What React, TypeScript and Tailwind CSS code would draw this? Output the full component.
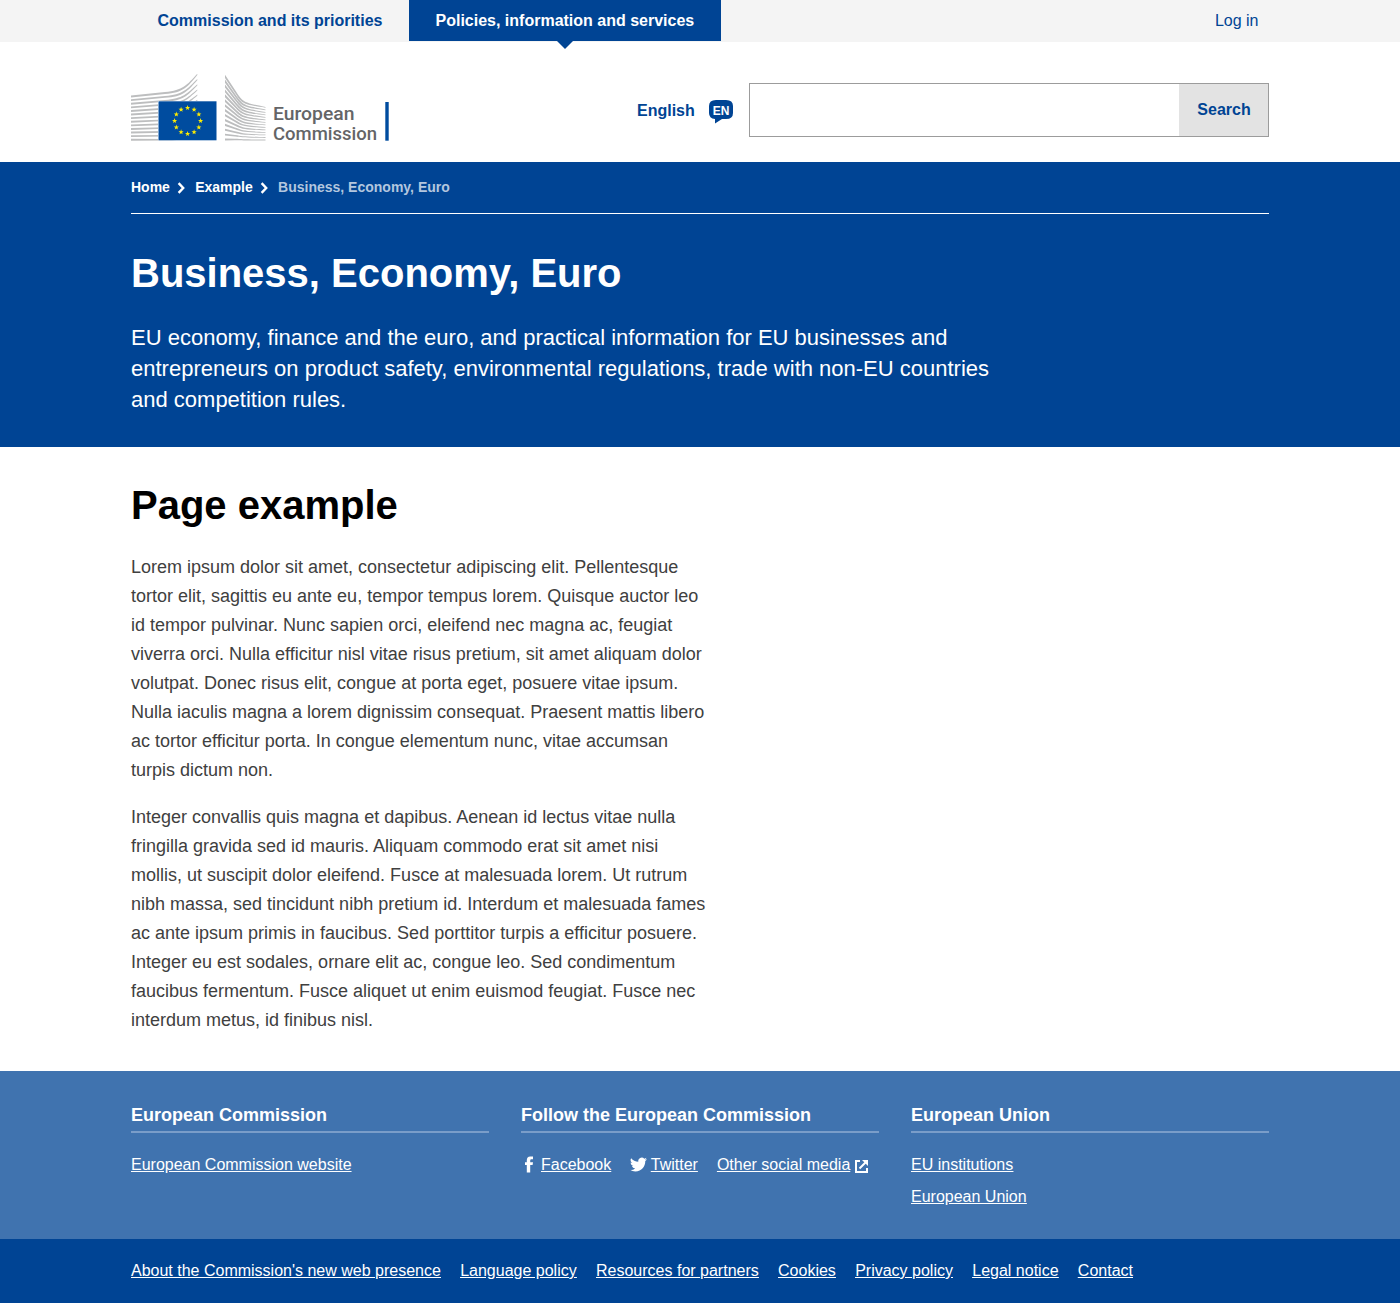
import React from 'react';

const stars = Array.from({ length: 12 }, (_, i) => {
  const a = (i * Math.PI) / 6;
  return [56.6 + 13 * Math.sin(a), 48.8 - 13 * Math.cos(a)];
});

function starPoints(cx: number, cy: number) {
  return Array.from({ length: 10 }, (_, i) => {
    const r = i % 2 ? 1.1 : 2.7;
    const a = (i * Math.PI) / 5;
    return `${(cx + r * Math.sin(a)).toFixed(2)},${(cy - r * Math.cos(a)).toFixed(2)}`;
  }).join(' ');
}

function Logo() {
  const left = Array.from({ length: 13 }, (_, i) => {
    const f = 1 - i / 12;
    const y0 = 24.5 + i * 3.6;
    const y1 = Math.min(2.5 + i * 5.2, 67.7);
    return `M0 ${y0 - 0.9}L34 ${y0 - 3.6 * f - 0.8}C52 ${y0 - 5.5 * f - 0.5} 56 ${y1 + 11 * f - 0.5} 66.3 ${y1 - 0.7}V${y1 + 0.5}C56.5 ${y1 + 12 * f + 0.4} 52.500 ${y0 - 4.6 * f + 0.9} 34 ${y0 - 3.4 * f + 0.8}L0 ${y0 + 1}Z`;
  });
  const right = Array.from({ length: 14 }, (_, i) => {
    const t = i / 13;
    const f = 1 - t;
    const y0 = 4.3 + 63.2 * t;
    const y1 = 35.3 + 32.7 * t;
    const w = 0.9 + 0.7 * f;
    return `M94 ${y0 - w}L104 ${y0 + 14.5 * f - 0.7}C112 ${y0 + 26.5 * f - 0.5} 112 ${y1 - 4.2 * f - 0.4} 134.5 ${y1 - 0.4}V${y1 + 0.4}C112 ${y1 - 3.6 * f + 0.6} 111 ${y0 + 27 * f + 0.6} 104 ${y0 + 16 * f + 0.7}L94 ${y0 + w}Z`;
  });
  return (
    <svg width="260" height="80" viewBox="0 0 260 80" className="block" role="img" aria-label="European Commission">
      <g fill="#bdbebf">{left.map((d, i) => <path key={i} d={d} />)}</g>
      <g fill="#bcbdbe">{right.map((d, i) => <path key={i} d={d} />)}</g>
      <rect x="27" y="29" width="59" height="39.5" fill="#fff" />
      <rect x="27.5" y="29.3" width="58" height="39" fill="#004c9f" />
      {stars.map(([x, y], i) => <polygon key={i} points={starPoints(x, y)} fill="#ffed00" />)}
      <g fill="#646567" className="font-['Roboto',sans-serif] font-medium text-[18px]">
        <text x="142" y="48.2" textLength="81.5" lengthAdjust="spacingAndGlyphs">European</text>
        <text x="142" y="68.2" textLength="104" lengthAdjust="spacingAndGlyphs">Commission</text>
      </g>
      <rect x="254.3" y="30" width="3.4" height="38.7" fill="#004c9f" />
    </svg>
  );
}

function Chevron() {
  return (
    <svg width="8" height="12" viewBox="0 0 8 12" className="ml-[7px] mr-[10.3px] block" fill="none" stroke="#fff" strokeWidth="2.4">
      <path d="M1.6 1.2L6.2 6L1.6 10.8" />
    </svg>
  );
}

function FooterColumn({ title, children }: { title: string; children: React.ReactNode }) {
  return (
    <section className="w-[358px]">
      <h3 className="h-[30px] border-b-2 border-[#7a9dc9] text-[18px] leading-[24px] font-bold">{title}</h3>
      {children}
    </section>
  );
}

const bottomLinks = ["About the Commission's new web presence", 'Language policy', 'Resources for partners', 'Cookies', 'Privacy policy', 'Legal notice', 'Contact'];

export default function App() {
  return (
    <div className="h-[1303px] bg-white font-['Liberation_Sans',Arial,sans-serif] text-[16px] text-[#404040]">
      <nav className="h-[42px] bg-[#f4f4f4] text-[#004494]">
        <div className="mx-auto flex w-[1138px] leading-[41px]">
          <a className="w-[278px] pl-[26.5px] font-bold">Commission and its priorities</a>
          <a className="relative h-[41px] w-[312px] bg-[#004494] pl-[26.5px] font-bold text-white">
            Policies, information and services
            <svg className="absolute top-[41px] left-[148px]" width="16" height="8"><path d="M0 0H16L8 8Z" fill="#004494" /></svg>
          </a>
          <a className="mr-[10.5px] ml-auto">Log in</a>
        </div>
      </nav>
      <header className="mx-auto flex h-[120px] w-[1138px] pt-[30px]">
        <Logo />
        <div className="mt-[28px] ml-[246px] flex h-[24px] text-[#004494]">
          <span className="w-[72px] leading-[21px] font-bold">English</span>
          <svg width="24" height="24" viewBox="0 0 24 24">
            <path d="M7 0H17Q24 0 24 6V13Q24 19 17 19H13L6 23.5V19Q0 18.5 0 13V6Q0 0 7 0Z" fill="#004494" />
            <text x="12" y="15" textAnchor="middle" fill="#fff" className="text-[12px] font-bold">EN</text>
          </svg>
        </div>
        <form className="mt-[11px] ml-auto flex h-[54px] w-[520px] border border-[#9c9c9c]">
          <input aria-label="Search" className="min-w-0 flex-1 px-4 outline-none" />
          <button type="button" className="w-[89px] bg-[#e3e3e3] pl-px font-bold text-[#004494]">Search</button>
        </form>
      </header>
      <div className="h-[285px] bg-[#004494] text-white">
        <div className="mx-auto w-[1138px]">
          <div className="flex h-[52px] items-center border-b border-white text-[14px] font-bold">
            <span>Home</span><Chevron /><span>Example</span><Chevron /><span className="text-[#b3c7df]">Business, Economy, Euro</span>
          </div>
          <h1 className="mt-[35px] text-[40px] leading-[48px] font-bold">Business, Economy, Euro</h1>
          <p className="mt-[25px] w-[880px] text-[22px] leading-[31px]">EU economy, finance and the euro, and practical information for EU businesses and entrepreneurs on product safety, environmental regulations, trade with non-EU countries and competition rules.</p>
        </div>
      </div>
      <main className="mx-auto h-[624px] w-[1138px] pt-[34px]">
        <h2 className="text-[40px] leading-[48px] font-bold text-black">Page example</h2>
        <div className="mt-[24px] w-[576px] space-y-[18px] text-[18px] leading-[29px]">
          <p>Lorem ipsum dolor sit amet, consectetur adipiscing elit. Pellentesque tortor elit, sagittis eu ante eu, tempor tempus lorem. Quisque auctor leo id tempor pulvinar. Nunc sapien orci, eleifend nec magna ac, feugiat viverra orci. Nulla efficitur nisl vitae risus pretium, sit amet aliquam dolor volutpat. Donec risus elit, congue at porta eget, posuere vitae ipsum. Nulla iaculis magna a lorem dignissim consequat. Praesent mattis libero ac tortor efficitur porta. In congue elementum nunc, vitae accumsan turpis dictum non.</p>
          <p>Integer convallis quis magna et dapibus. Aenean id lectus vitae nulla fringilla gravida sed id mauris. Aliquam commodo erat sit amet nisi mollis, ut suscipit dolor eleifend. Fusce at malesuada lorem. Ut rutrum nibh massa, sed tincidunt nibh pretium id. Interdum et malesuada fames ac ante ipsum primis in faucibus. Sed porttitor turpis a efficitur posuere. Integer eu est sodales, ornare elit ac, congue leo. Sed condimentum faucibus fermentum. Fusce aliquet ut enim euismod feugiat. Fusce nec interdum metus, id finibus nisl.</p>
        </div>
      </main>
      <footer className="text-white">
        <div className="h-[168px] bg-[#4073af] pt-[32px]">
          <div className="mx-auto flex w-[1138px] gap-[32px]">
            <FooterColumn title="European Commission">
              <a className="mt-[16px] block leading-[32px] underline">European Commission website</a>
            </FooterColumn>
            <FooterColumn title="Follow the European Commission">
              <div className="mt-[16px] flex items-center leading-[32px]">
                <svg width="8" height="17" viewBox="0 0 8 17" className="mb-px ml-[4px] mr-[8px]"><path d="M1.8 16.5V9H0V6.2H1.8V4.3Q1.8 .4 5.2 .4H8V3.3H6.3Q5.2 3.3 5.2 4.6V6.2H8L7.6 9H5.2V16.5Z" fill="#fff" /></svg>
                <a className="underline">Facebook</a>
                <svg width="17" height="17" viewBox="0 0 24 24" className="mb-px ml-[19px] mr-[3.5px]" fill="#fff"><path d="M23.95 4.57a10 10 0 0 1-2.82.77 4.96 4.96 0 0 0 2.16-2.72c-.95.55-2 .95-3.13 1.18a4.92 4.92 0 0 0-8.38 4.48C7.69 8.1 4.07 6.13 1.64 3.16a4.92 4.92 0 0 0 1.52 6.57 4.9 4.9 0 0 1-2.23-.62v.06a4.92 4.92 0 0 0 3.95 4.83 5 5 0 0 1-2.21.08 4.94 4.94 0 0 0 4.6 3.42A9.87 9.87 0 0 1 0 19.54a13.99 13.99 0 0 0 7.55 2.21c9.05 0 14-7.5 14-13.99 0-.21 0-.42-.02-.63a9.94 9.94 0 0 0 2.42-2.56Z" /></svg>
                <a className="underline">Twitter</a>
                <a className="ml-[19px] underline">Other social media</a>
                <svg width="13" height="13" viewBox="0 0 13 13" className="mt-[3px] ml-[4.5px]" fill="none" stroke="#fff" strokeWidth="2"><path d="M5 1H1V12H12V8M4.5 8.5L10.5 2.5" /><path d="M7 0H13V6Z" fill="#fff" stroke="none" /></svg>
              </div>
            </FooterColumn>
            <FooterColumn title="European Union">
              <div className="mt-[16px] leading-[32px] underline"><a className="block">EU institutions</a><a className="block">European Union</a></div>
            </FooterColumn>
          </div>
        </div>
        <div className="h-[64px] bg-[#004494]">
          <div className="mx-auto flex w-[1138px] gap-[19.3px] leading-[63px] underline">{bottomLinks.map((t) => <a key={t}>{t}</a>)}</div>
        </div>
      </footer>
    </div>
  );
}
